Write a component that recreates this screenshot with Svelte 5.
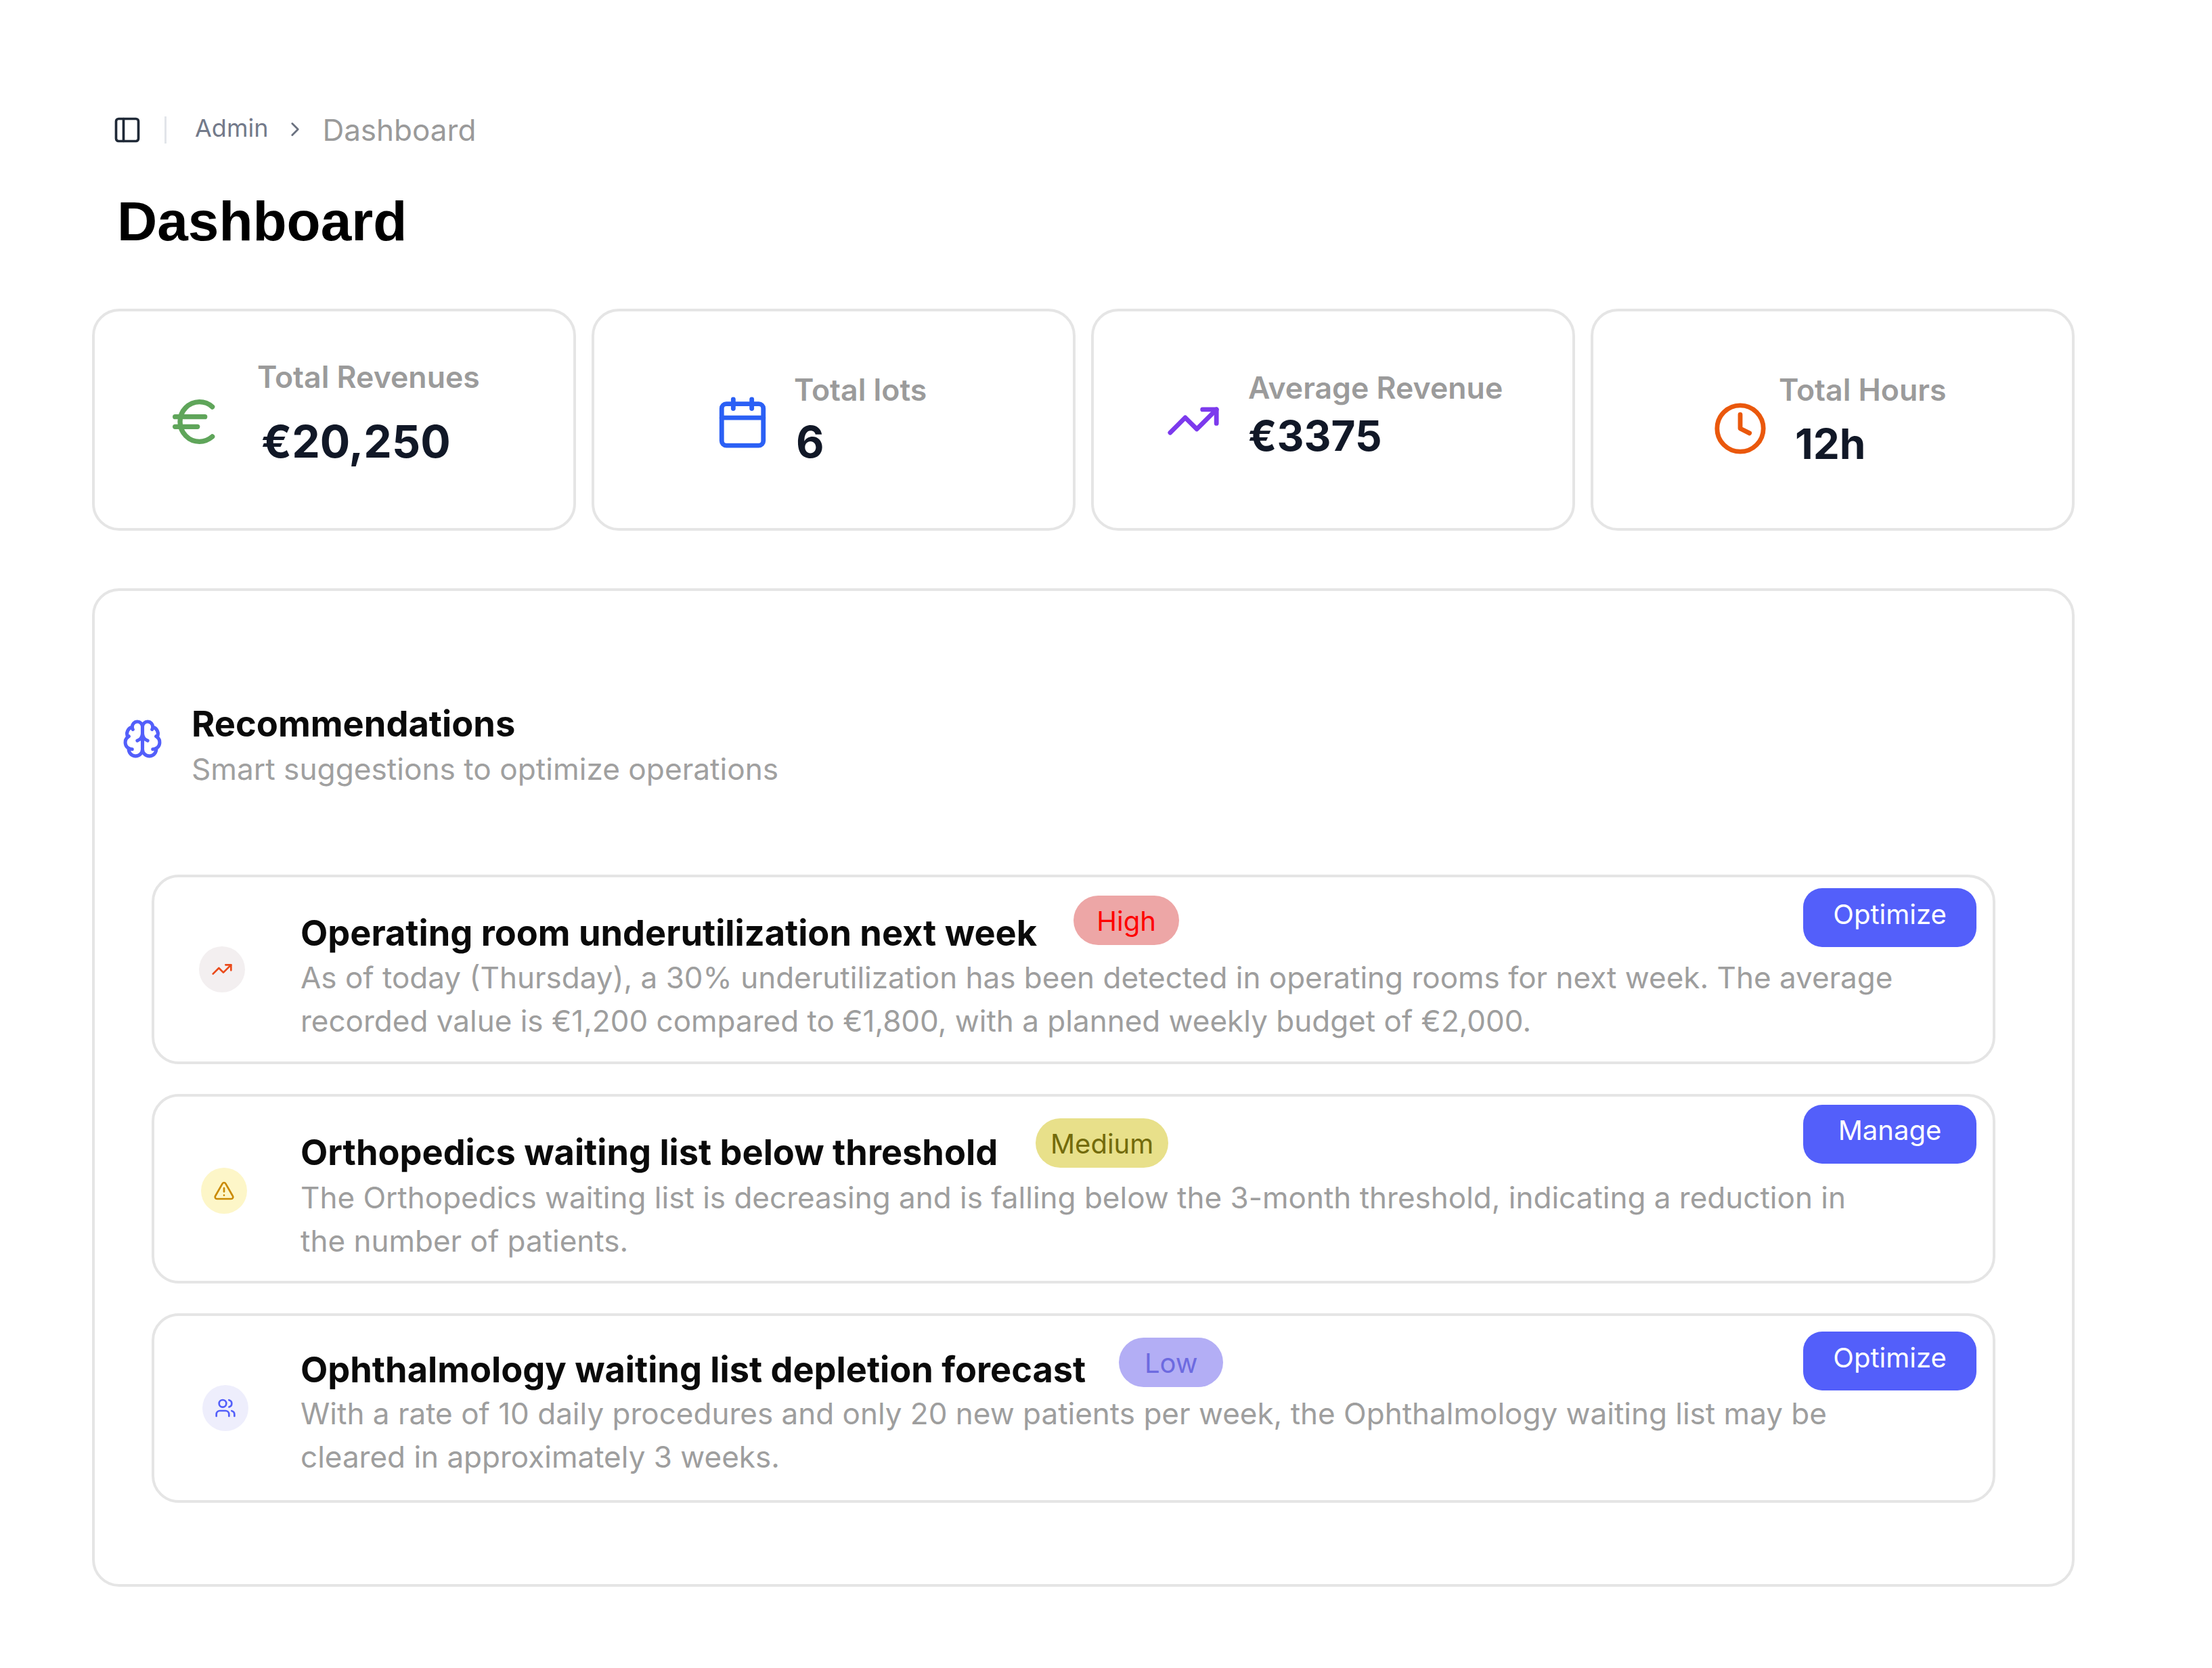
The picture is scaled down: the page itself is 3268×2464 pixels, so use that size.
<script>
  const stats = [
    { cls: 's1', label: 'Total Revenues', value: '€20,250', icon: 'euro' },
    { cls: 's2', label: 'Total lots', value: '6', icon: 'calendar' },
    { cls: 's3', label: 'Average Revenue', value: '€3375', icon: 'trend' },
    { cls: 's4', label: 'Total Hours', value: '12h', icon: 'clock' }
  ];

  const items = [
    {
      cls: 'i1',
      title: 'Operating room underutilization next week',
      badge: 'High',
      action: 'Optimize',
      icon: 'trend',
      text: 'As of today (Thursday), a 30% underutilization has been detected in operating rooms for next week. The average recorded value is €1,200 compared to €1,800, with a planned weekly budget of €2,000.'
    },
    {
      cls: 'i2',
      title: 'Orthopedics waiting list below threshold',
      badge: 'Medium',
      action: 'Manage',
      icon: 'alert',
      text: 'The Orthopedics waiting list is decreasing and is falling below the 3-month threshold, indicating a reduction in the number of patients.'
    },
    {
      cls: 'i3',
      title: 'Ophthalmology waiting list depletion forecast',
      badge: 'Low',
      action: 'Optimize',
      icon: 'users',
      text: 'With a rate of 10 daily procedures and only 20 new patients per week, the Ophthalmology waiting list may be cleared in approximately 3 weeks.'
    }
  ];
</script>

{#snippet icon(name)}
  <svg viewBox="0 0 24 24" fill="none" stroke="currentColor" stroke-width="2" stroke-linecap="round" stroke-linejoin="round">
    {#if name === 'euro'}
      <path d="M4 10h12" />
      <path d="M4 14h9" />
      <path d="M19 6a7.7 7.7 0 0 0-5.2-2A7.9 7.9 0 0 0 6 12c0 4.4 3.5 8 7.8 8 2 0 3.8-.8 5.2-2" />
    {:else if name === 'calendar'}
      <path d="M8 2v4" />
      <path d="M16 2v4" />
      <rect x="3" y="4" width="18" height="18" rx="2" />
      <path d="M3 10h18" />
    {:else if name === 'trend'}
      <polyline points="22 7 13.5 15.5 8.5 10.5 2 17" />
      <polyline points="16 7 22 7 22 13" />
    {:else if name === 'clock'}
      <circle cx="12" cy="12" r="10" />
      <polyline points="12 6 12 12 16 14" />
    {:else if name === 'alert'}
      <path d="m21.73 18-8-14a2 2 0 0 0-3.48 0l-8 14A2 2 0 0 0 4 21h16a2 2 0 0 0 1.73-3" />
      <path d="M12 9v4" />
      <path d="M12 17h.01" />
    {:else if name === 'users'}
      <path d="M16 21v-2a4 4 0 0 0-4-4H6a4 4 0 0 0-4 4v2" />
      <circle cx="9" cy="7" r="4" />
      <path d="M22 21v-2a4 4 0 0 0-3-3.87" />
      <path d="M16 3.13a4 4 0 0 1 0 7.75" />
    {/if}
  </svg>
{/snippet}

<main class="page">
  <!-- Breadcrumb -->
  <nav class="crumbs">
    <svg class="panel-icon" viewBox="0 0 24 24" fill="none" stroke="currentColor" stroke-width="2" stroke-linecap="round" stroke-linejoin="round">
      <rect x="3" y="3" width="18" height="18" rx="2" />
      <path d="M9 3v18" />
    </svg>
    <span class="sep"></span>
    <span class="crumb">Admin</span>
    <svg class="chevron" viewBox="0 0 24 24" fill="none" stroke="currentColor" stroke-width="2" stroke-linecap="round" stroke-linejoin="round">
      <path d="m9 18 6-6-6-6" />
    </svg>
    <span class="current">Dashboard</span>
  </nav>

  <h1>Dashboard</h1>

  <!-- Stat cards -->
  <section class="stats">
    {#each stats as s}
      <div class="stat {s.cls}">
        <div class="stat-icon">{@render icon(s.icon)}</div>
        <div class="stat-copy">
          <div class="stat-label">{s.label}</div>
          <div class="stat-value">{s.value}</div>
        </div>
      </div>
    {/each}
  </section>

  <!-- Recommendations -->
  <section class="panel">
    <header class="panel-head">
      <svg class="brain" viewBox="0 0 24 24" fill="none" stroke="currentColor" stroke-width="2" stroke-linecap="round" stroke-linejoin="round">
        <path d="M12 5a3 3 0 1 0-5.997.125 4 4 0 0 0-2.526 5.77 4 4 0 0 0 .556 6.588A4 4 0 1 0 12 18Z" />
        <path d="M12 5a3 3 0 1 1 5.997.125 4 4 0 0 1 2.526 5.77 4 4 0 0 1-.556 6.588A4 4 0 1 1 12 18Z" />
        <path d="M15 13a4.5 4.5 0 0 1-3-4 4.5 4.5 0 0 1-3 4" />
        <path d="M17.599 6.5a3 3 0 0 0 .399-1.375" />
        <path d="M6.003 5.125A3 3 0 0 0 6.401 6.5" />
        <path d="M3.477 10.896a4 4 0 0 1 .585-.396" />
        <path d="M19.938 10.5a4 4 0 0 1 .585.396" />
        <path d="M6 18a4 4 0 0 1-1.967-.516" />
        <path d="M19.967 17.484A4 4 0 0 1 18 18" />
      </svg>
      <div>
        <h2>Recommendations</h2>
        <p class="panel-sub">Smart suggestions to optimize operations</p>
      </div>
    </header>

    <div class="items">
      {#each items as item}
        <article class="item {item.cls}">
          <div class="item-icon">{@render icon(item.icon)}</div>
          <div class="item-body">
            <div class="item-top">
              <h3>{item.title}</h3>
              <span class="badge">{item.badge}</span>
              <button type="button">{item.action}</button>
            </div>
            <p>{item.text}</p>
          </div>
        </article>
      {/each}
    </div>
  </section>
</main>

<style>
  :global(body) {
    margin: 0;
    background: #fff;
    font-family: Inter, 'Liberation Sans', sans-serif;
  }

  .page {
    box-sizing: border-box;
    width: 3268px;
    height: 2464px;
    padding: 168px 203px 0 136px;
  }

  /* Breadcrumb */
  .crumbs {
    display: flex;
    align-items: center;
    height: 48px;
    padding-left: 30px;
  }

  .panel-icon {
    width: 44px;
    height: 44px;
    color: #1f2937;
  }

  .sep {
    width: 3px;
    height: 40px;
    margin: 0 42px 0 33px;
    background: #e2e5ea;
  }

  .crumb {
    margin-top: -6px;
    font-size: 36px;
    color: #737a8a;
  }

  .chevron {
    width: 34px;
    height: 34px;
    margin: -2px 23px 0 23px;
    color: #6b7280;
  }

  .current {
    font-size: 44px;
    color: #9a9a9a;
  }

  h1 {
    margin: 65px 0 83px 37px;
    font-family: 'Liberation Sans', Arial, sans-serif;
    font-size: 82px;
    font-weight: 700;
    line-height: 92px;
    color: #000;
  }

  /* Stat cards */
  .stats {
    display: grid;
    grid-template-columns: repeat(4, 1fr);
    gap: 23px;
  }

  .stat {
    box-sizing: border-box;
    display: flex;
    align-items: flex-start;
    height: 328px;
    border: 4px solid #e5e5e5;
    border-radius: 40px;
    background: #fff;
  }

  .stat-icon {
    flex: none;
    width: 82px;
    height: 82px;
  }

  .stat-icon svg {
    display: block;
    width: 100%;
    height: 100%;
  }

  .stat-label {
    font-size: 44.6px;
    font-weight: 600;
    line-height: 56px;
    color: #9b9b9b;
    white-space: nowrap;
  }

  .stat-value {
    font-size: 66px;
    font-weight: 700;
    line-height: 80px;
    color: #111827;
  }

  .s1 { padding: 69px 0 0 104px; }
  .s1 .stat-icon { width: 88px; height: 88px; margin: 50px 48px 0 0; color: #5fa55a; }
  .s1 .stat-value { margin: 27px 0 0 6px; }

  .s2 { padding: 88px 0 0 178px; }
  .s2 .stat-icon { margin: 35px 35px 0 0; color: #2b60f5; }
  .s2 .stat-value { margin: 9px 0 0 3px; font-size: 64px; }

  .s3 { padding: 85px 0 0 106px; }
  .s3 .stat-icon { margin: 36px 40px 0 0; color: #7c3aed; }
  .s3 .stat-value { margin: 3px 0 0 0; font-size: 62px; }

  .s4 { padding: 88px 0 0 176px; }
  .s4 .stat-icon { margin: 44px 16px 0 0; color: #ea580c; }
  .s4 .stat-value { margin: 12px 0 0 24px; font-size: 62px; }

  /* Panel */
  .panel {
    box-sizing: border-box;
    height: 1475px;
    margin-top: 85px;
    padding: 164px 0 0 84px;
    border: 4px solid #e5e5e5;
    border-radius: 40px;
  }

  .panel-head {
    display: flex;
    gap: 42px;
    margin-left: -44px;
  }

  .brain {
    flex: none;
    width: 61px;
    height: 61px;
    margin-top: 24px;
    color: #535ffa;
  }

  h2 {
    margin: 0;
    font-size: 52.4px;
    font-weight: 700;
    line-height: 64px;
    color: #0a0a0a;
  }

  .panel-sub {
    margin: 3px 0 0;
    font-size: 44.2px;
    line-height: 64px;
    color: #a0a0a0;
  }

  .items {
    display: flex;
    flex-direction: column;
    gap: 44px;
    width: 2724px;
    margin-top: 124px;
  }

  .item {
    box-sizing: border-box;
    position: relative;
    display: flex;
    height: 280px;
    padding-right: 24px;
    border: 4px solid #e5e5e5;
    border-radius: 40px;
  }

  .item-icon {
    flex: none;
    display: flex;
    align-items: center;
    justify-content: center;
    width: 68px;
    height: 68px;
    margin: 102px 82px 0 66px;
    border-radius: 50%;
  }

  .item-icon svg {
    width: 32px;
    height: 32px;
  }

  .item-body {
    flex: 1;
    min-width: 0;
  }

  .item-top {
    display: flex;
    align-items: flex-start;
    height: 106px;
  }

  h3 {
    margin: 0;
    font-size: 52.3px;
    font-weight: 700;
    line-height: 64px;
    color: #0a0a0a;
    white-space: nowrap;
  }

  .badge {
    box-sizing: border-box;
    display: flex;
    align-items: center;
    justify-content: center;
    height: 73px;
    padding-top: 2px;
    border-radius: 37px;
    font-size: 40px;
  }

  button {
    box-sizing: border-box;
    width: 256px;
    height: 87px;
    margin-left: auto;
    padding: 0 0 10px;
    border: 0;
    border-radius: 28px;
    background: #535ffa;
    color: #fff;
    font-family: inherit;
    font-size: 40px;
  }

  .item p {
    width: 2357px;
    margin: 0;
    font-size: 44px;
    line-height: 64px;
    color: #9e9e9e;
  }

  .i1 .item-icon { background: #f3eff0; color: #ea4a1a; }
  .i1 h3 { margin-top: 50px; }
  .i1 .badge { width: 156px; margin: 27px 0 0 54px; background: #eda6a6; color: #f00; }
  .i1 button { margin-top: 16px; }
  .i1 p { margin-top: 10px; }

  .i2 .item-icon { margin: 105px 79px 0 69px; background: #fdf6c8; color: #ca8a04; }
  .i2 h3 { margin-top: 50px; }
  .i2 .badge { width: 196px; margin: 32px 0 0 56px; background: #e8e08a; color: #736b0b; }
  .i2 button { margin-top: 12px; padding-bottom: 12px; }
  .i2 p { margin-top: 11px; }

  .i3 .item-icon { margin-left: 71px; margin-right: 77px; background: #eeeefc; color: #535ffa; }
  .i3 h3 { margin-top: 47px; }
  .i3 .badge { width: 154px; margin: 32px 0 0 49px; background: #b3aef5; color: #6d6ae0; }
  .i3 button { margin-top: 23px; }
  .i3 p { margin-top: 6px; }
</style>
